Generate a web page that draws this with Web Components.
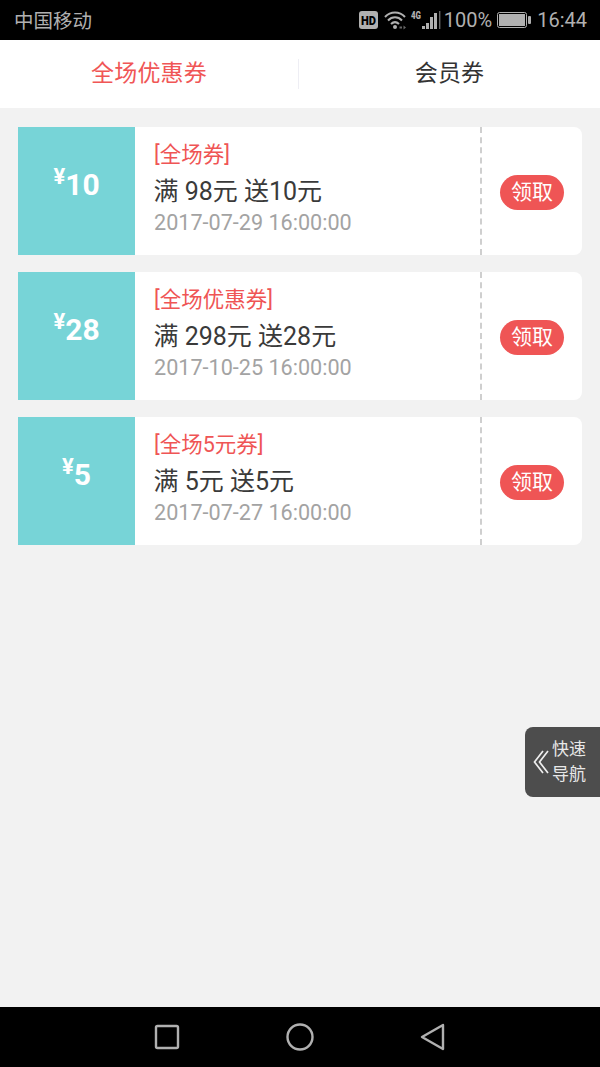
<!DOCTYPE html>
<html lang="zh">
<head>
<meta charset="utf-8">
<title>优惠券</title>
<style>
    html, body { margin: 0; height: 100%; }
    body { font-family: Roboto, "Noto Sans CJK SC", sans-serif; background: #f2f2f2; }
    coupon-page { height: 1067px; }
</style>
</head>
<body>
<coupon-page>
    <status-bar slot="status"></status-bar>
    <coupon-tabs slot="tabs"></coupon-tabs>
    <coupon-card amount="10" title="[全场券]" rule="满 98元 送10元" date="2017-07-29 16:00:00"></coupon-card>
    <coupon-card amount="28" title="[全场优惠券]" rule="满 298元 送28元" date="2017-10-25 16:00:00"></coupon-card>
    <coupon-card amount="5" title="[全场5元券]" rule="满 5元 送5元" date="2017-07-27 16:00:00"></coupon-card>
    <quick-nav slot="float"></quick-nav>
    <nav-bar slot="nav"></nav-bar>
</coupon-page>

<script>
class CouponPage extends HTMLElement {
    constructor() {
        super();
        this.attachShadow({ mode: 'open' });
        this.shadowRoot.innerHTML = `
            <style>
                :host { display: flex; flex-direction: column; position: relative; overflow: hidden; }
                .list {
                    flex: 1;
                    display: flex;
                    flex-direction: column;
                    gap: 17px;
                    padding: 19px 18px;
                }
            </style>
            <slot name="status"></slot>
            <slot name="tabs"></slot>
            <div class="list"><slot></slot></div>
            <slot name="float"></slot>
            <slot name="nav"></slot>
        `;
    }
}

class StatusBar extends HTMLElement {
    constructor() {
        super();
        this.attachShadow({ mode: 'open' });
        this.shadowRoot.innerHTML = `
            <style>
                :host {
                    display: flex;
                    align-items: center;
                    height: 40px;
                    flex: none;
                    background: #000;
                    color: #b0b0b0;
                    font-size: 20px;
                    padding: 0 13px 0 14px;
                }
                .carrier { flex: 1; font-size: 19.5px; padding-bottom: 2px; }
                .right { display: flex; align-items: center; }
                svg { display: block; }
                .pct { margin-left: 3px; }
                .battery { margin-left: 5px; }
                .time { margin-left: 6px; }
            </style>
            <span class="carrier">中国移动</span>
            <div class="right">
                <svg width="82" height="40" viewBox="0 0 82 40">
                    <rect x="0" y="11" width="19" height="18" rx="3" fill="#b0b0b0"/>
                    <text x="9.5" y="24.5" text-anchor="middle" font-family="Roboto" font-weight="900" font-size="12" textLength="15" lengthAdjust="spacingAndGlyphs" fill="#000">HD</text>
                    <g fill="none" stroke="#b0b0b0" stroke-width="2">
                        <path d="M26 17 C31.5 11 40.5 11 46 17"/>
                        <path d="M29 20.5 C33 16.3 39 16.3 43 20.5"/>
                        <path d="M32 24 C34.5 21.6 37.5 21.6 40 24"/>
                    </g>
                    <circle cx="36" cy="27" r="2" fill="#b0b0b0"/>
                    <path d="M40.5 26.5h2.5v2h-2.5zM44.5 25.5v4l2.5-2z" fill="#666"/>
                    <text x="52" y="19" font-family="Roboto" font-weight="900" font-size="10" textLength="10" lengthAdjust="spacingAndGlyphs" fill="#b0b0b0">4G</text>
                    <rect x="63" y="26" width="3" height="3" fill="#b0b0b0"/>
                    <rect x="67" y="23" width="3" height="6" fill="#b0b0b0"/>
                    <rect x="71" y="17" width="3" height="12" fill="#b0b0b0"/>
                    <rect x="75" y="13" width="3" height="16" fill="#b0b0b0"/>
                    <rect x="80" y="11" width="1.4" height="18" fill="#666"/>
                </svg>
                <span class="pct">100%</span>
                <svg class="battery" width="34" height="40" viewBox="0 0 34 40">
                    <rect x="0.5" y="12.5" width="29" height="15" rx="2" fill="none" stroke="#b0b0b0"/>
                    <rect x="2" y="14" width="26" height="12" fill="#b0b0b0"/>
                    <rect x="31" y="16" width="3" height="8" rx="1" fill="#b0b0b0"/>
                </svg>
                <span class="time">16:44</span>
            </div>
        `;
    }
}

class CouponTabs extends HTMLElement {
    constructor() {
        super();
        this.attachShadow({ mode: 'open' });
        this.shadowRoot.innerHTML = `
            <style>
                :host {
                    display: flex;
                    align-items: center;
                    flex: none;
                    height: 68px;
                    background: #fff;
                    font-size: 23px;
                    letter-spacing: 0.2px;
                    color: #333;
                }
                .tab { text-align: center; line-height: 30px; }
                .tab.on { color: #f05656; width: 298px; }
                .tab + .tab { flex: 1; border-left: 1px solid #eeeef4; }
            </style>
            <div class="tab on">全场优惠券</div>
            <div class="tab">会员券</div>
        `;
    }
}

class CouponCard extends HTMLElement {
    constructor() {
        super();
        this.attachShadow({ mode: 'open' });
        this.shadowRoot.innerHTML = `
            <style>
                :host {
                    display: flex;
                    height: 128px;
                    flex: none;
                    background: #fff;
                    border-radius: 0 8px 8px 0;
                    overflow: hidden;
                }
                .price {
                    flex: none;
                    width: 117px;
                    background: #77d4d7;
                    color: #fff;
                    font-weight: 700;
                    display: flex;
                    justify-content: center;
                    align-items: center;
                    padding-bottom: 14px;
                    box-sizing: border-box;
                }
                .price span { font-size: 30px; }
                .price small { font-size: 22px; align-self: center; margin: -15px 0 0 0; }
                .info {
                    flex: 1;
                    padding: 13px 0 0 19px;
                    display: flex;
                    flex-direction: column;
                    white-space: nowrap;
                }
                .title { color: #ef5555; font-size: 21.5px; line-height: 29px; }
                .rule { color: #3a3a3a; font-size: 25px; line-height: 34px; margin: 6px 0 0 -0.5px; }
                .date { color: #a3a3a3; font-size: 21.6px; line-height: 28px; margin-top: 0; }
                .action {
                    flex: none;
                    width: 100px;
                    border-left: 2px dashed #cfcfcf;
                    display: flex;
                    align-items: center;
                    justify-content: center;
                    padding-top: 3px;
                }
                .get {
                    background: #ef5555;
                    color: #fff;
                    font-size: 21px;
                    line-height: 35px;
                    width: 64px;
                    text-align: center;
                    border-radius: 18px;
                }
            </style>
            <div class="price"><small>¥</small><span></span></div>
            <div class="info">
                <div class="title"></div>
                <div class="rule"></div>
                <div class="date"></div>
            </div>
            <div class="action"><div class="get">领取</div></div>
        `;
    }

    connectedCallback() {
        this.shadowRoot.querySelector('.price span').textContent = this.getAttribute('amount');
        this.shadowRoot.querySelector('.title').textContent = this.getAttribute('title');
        this.shadowRoot.querySelector('.rule').textContent = this.getAttribute('rule');
        this.shadowRoot.querySelector('.date').textContent = this.getAttribute('date');
    }
}

class QuickNav extends HTMLElement {
    constructor() {
        super();
        this.attachShadow({ mode: 'open' });
        this.shadowRoot.innerHTML = `
            <style>
                :host {
                    position: absolute;
                    right: 0;
                    top: 727px;
                    width: 75px;
                    height: 70px;
                    box-sizing: border-box;
                    background: #4d4d4d;
                    border-radius: 8px 0 0 8px;
                    color: #e8e8e8;
                    font-size: 17px;
                    line-height: 25px;
                    display: flex;
                    align-items: center;
                    padding-left: 8px;
                }
                svg { display: block; margin-right: 3px; }
            </style>
            <svg width="16" height="24" viewBox="0 0 16 24" fill="none" stroke="#eee" stroke-width="1.7">
                <path d="M10 1 L1.5 12 L10 23"/>
                <path d="M15 1 L6.5 12 L15 23"/>
            </svg>
            <div>快速<br>导航</div>
        `;
    }
}

class NavBar extends HTMLElement {
    constructor() {
        super();
        this.attachShadow({ mode: 'open' });
        this.shadowRoot.innerHTML = `
            <style>
                :host {
                    display: flex;
                    flex: none;
                    height: 60px;
                    background: #000;
                    justify-content: center;
                    align-items: center;
                    gap: 105px;
                }
                svg { display: block; }
            </style>
            <svg width="28" height="28" viewBox="0 0 28 28" fill="none" stroke="#b0b0b0" stroke-width="2.4" stroke-linejoin="round">
                <rect x="3" y="3" width="22" height="22" rx="1.5"/>
            </svg>
            <svg width="28" height="28" viewBox="0 0 28 28" fill="none" stroke="#b0b0b0" stroke-width="2.4">
                <circle cx="14" cy="14" r="12.5"/>
            </svg>
            <svg width="28" height="28" viewBox="0 0 28 28" fill="none" stroke="#b0b0b0" stroke-width="2.4" stroke-linejoin="round">
                <path d="M24 2 L3 14 L24 26 Z"/>
            </svg>
        `;
    }
}

customElements.define('coupon-page', CouponPage);
customElements.define('status-bar', StatusBar);
customElements.define('coupon-tabs', CouponTabs);
customElements.define('coupon-card', CouponCard);
customElements.define('quick-nav', QuickNav);
customElements.define('nav-bar', NavBar);
</script>
</body>
</html>
